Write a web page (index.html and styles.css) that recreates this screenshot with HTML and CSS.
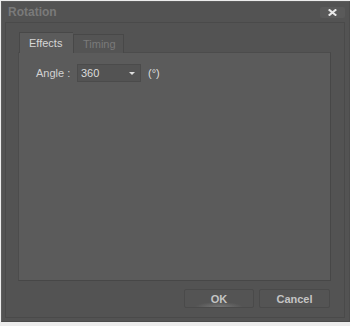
FILE: index.html
```html
<!DOCTYPE html>
<html>
<head>
<meta charset="utf-8">
<link rel="stylesheet" href="styles.css">
</head>
<body>
<div class="dialog">
  <div class="titlebar">
    <span class="title">Rotation</span>
    <span class="close">
      <svg width="9" height="7" viewBox="0 0 9 7"><path d="M1.5 1 L7.5 6 M7.5 1 L1.5 6" stroke="#e8e8e8" stroke-width="2" stroke-linecap="square"/></svg>
    </span>
  </div>
  <div class="frame">
    <div class="tabs">
      <div class="tab active">Effects</div>
      <div class="tab">Timing</div>
    </div>
    <div class="panel">
      <div class="row">
        <span class="label">Angle :</span>
        <span class="combo"><span class="value">360</span><span class="arrow"></span></span>
        <span class="unit">(°)</span>
      </div>
    </div>
    <div class="buttons">
      <button class="btn ok">OK</button>
      <button class="btn">Cancel</button>
    </div>
  </div>
</div>
</body>
</html>
```
FILE: styles.css
```css
html, body {
  margin: 0;
  padding: 0;
  background: #ececec;
  width: 350px;
  height: 326px;
  overflow: hidden;
  font-family: "Liberation Sans", Arial, sans-serif;
  font-size: 11px;
}
.dialog {
  margin: 1px 0 0 1px;
  width: 349px;
  height: 321px;
  box-sizing: border-box;
  background: #535353;
  border: 1px solid #5d5d5d;
  border-right-color: #4c4c4c;
  border-bottom-color: #4a4a4a;
  display: flex;
  flex-direction: column;
}
.titlebar {
  height: 20px;
  display: flex;
  justify-content: space-between;
  align-items: flex-start;
  padding-left: 6px;
  flex: none;
}
.title {
  font-weight: bold;
  font-size: 12px;
  color: #7a7a7a;
  line-height: 20px;
}
.close {
  margin-top: 5px;
  margin-right: 4px;
  width: 25px;
  height: 11px;
  border-radius: 2px;
  background: #5a5a5a;
  display: flex;
  align-items: center;
  justify-content: center;
}
.frame {
  flex: 1;
  margin: 0 4px 3px 3px;
  border: 1px solid #4a4a4a;
  padding: 9px 13px 0 12px;
  display: flex;
  flex-direction: column;
}
.tabs {
  display: flex;
  align-items: flex-end;
  margin-left: 1px;
  height: 21px;
  margin-bottom: -1px;
  position: relative;
  z-index: 1;
}
.tab {
  height: 19px;
  box-sizing: border-box;
  border: 1px solid #484848;
  border-bottom: none;
  background: #545454;
  color: #7a7a7a;
  padding: 0 8px 0 9px;
  line-height: 19px;
  width: 51px;
}
.tab.active {
  height: 21px;
  width: 54px;
  line-height: 21px;
  background: #5b5b5b;
  color: #d6d6d6;
  border-right: none;
  padding-left: 9px;
}
.panel {
  height: 229px;
  box-sizing: border-box;
  background: #5b5b5b;
  border: 1px solid #4c4c4c;
  border-right-color: #474747;
  border-bottom-color: #474747;
  padding: 11px 0 0 17px;
}
.row {
  display: flex;
  align-items: center;
  height: 18px;
}
.label {
  color: #d2d2d2;
  width: 41px;
}
.combo {
  width: 64px;
  height: 18px;
  box-sizing: border-box;
  background: #535353;
  border: 1px solid #4b4b4b;
  display: flex;
  align-items: center;
  justify-content: space-between;
  padding: 0 5px 0 3px;
  color: #dcdcdc;
}
.arrow {
  width: 0;
  height: 0;
  border-left: 3px solid transparent;
  border-right: 3px solid transparent;
  border-top: 3px solid #dedede;
}
.unit {
  color: #dedede;
  margin-left: 7px;
}
.buttons {
  display: flex;
  justify-content: flex-end;
  gap: 5px;
  margin-top: 8px;
  padding-right: 1px;
}
.btn {
  font-family: "Liberation Sans", Arial, sans-serif;
  font-size: 11px;
  height: 19px;
  width: 70px;
  padding: 0;
  box-sizing: border-box;
  background: #545454;
  border: 1px solid #4a4a4a;
  border-radius: 2px;
  color: #c4c4c4;
  font-weight: bold;
}
.btn + .btn {
  width: 71px;
}
.btn.ok {
  background: radial-gradient(ellipse 24px 5px at 50% 100%, #767676, #545454);
}
```
